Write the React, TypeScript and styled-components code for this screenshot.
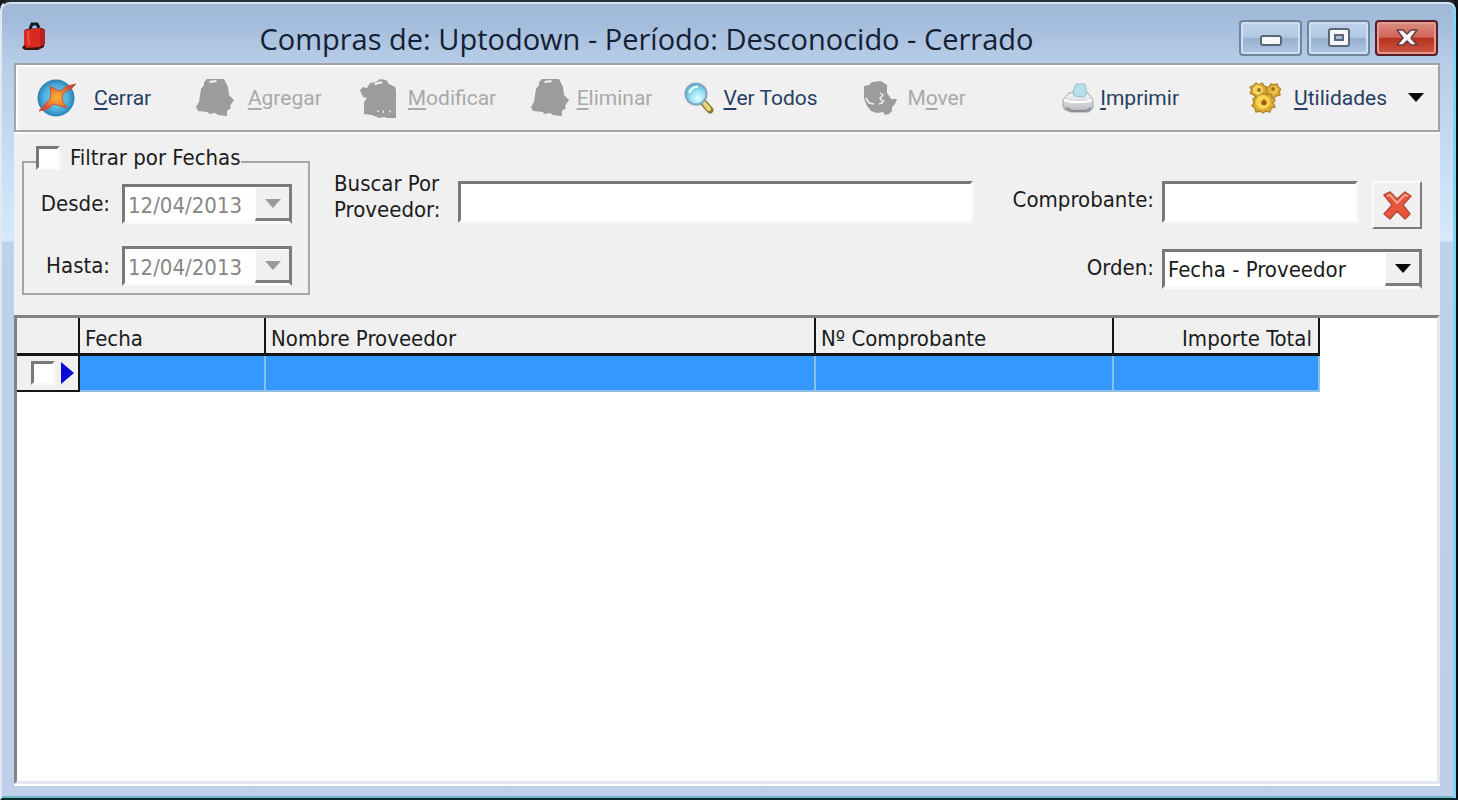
import React from "react";
import styled, { createGlobalStyle, css } from "styled-components";

const GlobalStyle = createGlobalStyle`
  *, *::before, *::after { box-sizing: border-box; }
  body {
    margin: 0;
    background: #16181c;
    color: #1c1c1c;
    font-family: "DejaVu Sans Condensed", "DejaVu Sans", Tahoma, sans-serif;
    font-size: 22px;
    line-height: 26px;
  }
  button, input, select { font: inherit; color: inherit; margin: 0; }
`;

const sunken = css`
  border: 3px solid;
  border-color: #787878 #fafafa #fafafa #787878;
  border-radius: 0;
`;

const raised = css`
  background: #f0f0f0;
  border: 2px solid;
  border-color: #fcfcfc #7c7c7c #7c7c7c #fcfcfc;
`;

const Frame = styled.main`
  display: flex;
  flex-direction: column;
  min-height: 100vh;
  padding: 0 16px 14px 12px;
  border: 2px solid;
  border-color: #2a2e36 #0b0f12 #04282e #dfeaf5;
  border-radius: 10px 10px 0 0;
  background: linear-gradient(#a0b8d4 0, #a3bcdc 20px, #b8cde8 62px, #c6dcf5 150px, #d6e9fb 239px, #bdd1ea 240px, #bfcfe9 100%);
  box-shadow: inset 0 2px 0 #d4e2f0, inset -3px 0 0 #86d2f3, inset 0 -2px 0 #6fb5c4;
`;

const TitleBar = styled.header`
  display: flex;
  align-items: flex-start;
  height: 61px;
  padding: 18px 2px 0 8px;
`;

const Title = styled.h1`
  flex: 1;
  margin: 0;
  padding-left: 8px;
  text-align: center;
  white-space: nowrap;
  font-family: "Open Sans", "Segoe UI", sans-serif;
  font-size: 29px;
  font-weight: 400;
  line-height: 38px;
  color: #142033;
`;

const AppIcon = styled.svg`
  width: 24px;
  height: 30px;
  margin-top: 2px;
`;

const WindowButtons = styled.div`
  display: flex;
  gap: 5px;
`;

const WindowButton = styled.button<{ $danger?: boolean }>`
  display: grid;
  place-items: center;
  width: 63px;
  height: 36px;
  padding: 0;
  border: 2px solid ${(p) => (p.$danger ? "#5a1d24" : "#71859f")};
  border-radius: 4px;
  box-shadow: inset 0 0 0 2px ${(p) => (p.$danger ? "#e39a90" : "#cfdff2")};
  background: ${(p) =>
    p.$danger
      ? "linear-gradient(#dc8d82 0, #cf6558 48%, #b5301f 50%, #cf5a45 100%)"
      : "linear-gradient(#bfd2ea 0, #b3c8e2 48%, #96afcd 50%, #b0c8e4 100%)"};
`;

const Client = styled.div`
  display: flex;
  flex: 1;
  flex-direction: column;
  background: #f0f0f0;
`;

const ToolBar = styled.nav`
  display: grid;
  grid-template-columns: 158fr 164fr 171fr 154fr 181fr 198fr 187fr auto;
  align-items: center;
  height: 69px;
  padding: 0 14px 0 21px;
  border: 2px solid #a2a4a8;
  box-shadow: inset 2px 2px 0 #fdfdfd, 0 2px 0 #fafafa;
`;

const ToolButton = styled.button<{ $gap: number }>`
  display: flex;
  align-items: center;
  gap: ${(p) => p.$gap}px;
  padding: 0;
  border: 0;
  background: none;
  text-align: left;
  white-space: nowrap;
  font-family: Roboto, Arial, sans-serif;
  font-size: 21px;
  line-height: 26px;
  color: #263f63;

  &:disabled { color: #a9a9a9; }
  svg { flex: none; }
`;

const Key = styled.span`
  text-decoration: underline;
  text-decoration-thickness: 2px;
  text-underline-offset: 3px;
`;

const Caret = styled.svg`
  width: 16px;
  height: 10px;
  margin-left: 8px;
`;

const Filters = styled.form`
  display: flex;
  align-items: flex-start;
  padding: 13px 18px 20px 8px;
`;

const DateGroup = styled.fieldset`
  display: grid;
  gap: 22px;
  width: 288px;
  margin: 0;
  padding: 5px 16px 7px 12px;
  border: 2px solid #a5a5a5;
`;

const Legend = styled.legend`
  padding: 0 0 8px;
`;

const CheckLabel = styled.label`
  display: flex;
  align-items: center;
  gap: 10px;
`;

const CheckBox = styled.input.attrs({ type: "checkbox" })`
  appearance: none;
  width: 24px;
  height: 24px;
  background: #fff;
  ${sunken}

  &:checked { background: radial-gradient(#1c1c1c 40%, #fff 45%); }
`;

const DateRow = styled.div`
  display: grid;
  grid-template-columns: 1fr 170px;
  gap: 12px;
  align-items: center;
  text-align: right;
`;

const DateBox = styled.div`
  display: flex;
  height: 40px;
  border: 3px solid;
  border-color: #787878 #7c7c7c #fafafa #787878;
  background: #fff;
`;

const DateInput = styled.input`
  flex: 1;
  min-width: 0;
  padding: 4px 0 0 3px;
  border: 0;
  background: none;
  &:disabled { color: #878787; }
`;

const DropButton = styled.button`
  display: grid;
  place-items: center;
  width: 34px;
  padding: 0;
  ${raised}
  border-width: 1px 0 3px 1px;
`;

const SearchLabel = styled.label`
  width: 124px;
  margin: 26px 0 0 24px;
`;

const TextInput = styled.input`
  min-width: 0;
  height: 42px;
  padding: 0 6px;
  background: #fff;
  ${sunken}
`;

const SearchInput = styled(TextInput)`
  flex: 1;
  margin-top: 36px;
`;

const OrderGrid = styled.div`
  display: grid;
  grid-template-columns: auto 260px;
  column-gap: 8px;
  row-gap: 20px;
  margin: 36px 0 0 40px;
  align-items: start;
  text-align: right;
`;

const FieldLabel = styled.label`
  padding-top: 6px;
`;

const VoucherField = styled.div`
  display: flex;
  align-items: flex-start;
  gap: 14px;
`;

const VoucherInput = styled(TextInput)`
  flex: 1;
`;

const ClearButton = styled.button`
  display: grid;
  place-items: center;
  width: 50px;
  height: 48px;
  padding: 0;
  ${raised}
`;

const SelectBox = styled.div`
  position: relative;
  height: 40px;
  border: 3px solid;
  border-color: #787878 #7c7c7c #fafafa #787878;
  background: #fff;
`;

const Select = styled.select`
  appearance: none;
  width: 100%;
  height: 100%;
  padding: 2px 34px 0 3px;
  border: 0;
  border-radius: 0;
  background: none;
`;

const SelectArrow = styled.span`
  position: absolute;
  top: 0;
  right: 0;
  bottom: 0;
  display: grid;
  place-items: center;
  width: 34px;
  pointer-events: none;
  ${raised}
  border-width: 1px 0 3px 1px;
`;

const GridPane = styled.section`
  flex: 1;
  overflow: auto;
  border: 3px solid;
  border-color: #808286 #e3e7ee #e3e7ee #808286;
  background: #fff;
  box-shadow: 0 2px 0 #fff;
`;

const Table = styled.table`
  table-layout: fixed;
  border-spacing: 0;
  width: 1303px;
`;

const Col = styled.col<{ $w: number }>`
  width: ${(p) => p.$w}px;
`;

const HeadCell = styled.th<{ $end?: boolean }>`
  height: 38px;
  padding: 6px 6px 0 5px;
  border-right: 2px solid #161616;
  border-bottom: 3px solid #161616;
  background: #f0f0f0;
  font-weight: 400;
  text-align: ${(p) => (p.$end ? "right" : "left")};
`;

const MarkerCell = styled.td`
  height: 36px;
  padding: 0 4px 0 14px;
  border-right: 2px solid #161616;
  border-bottom: 2px solid #161616;
  background: #f0f0f0;
`;

const Marker = styled.div`
  display: flex;
  align-items: center;
  justify-content: space-between;
`;

const DataCell = styled.td`
  padding: 0;
  border-right: 2px solid #8fbfe8;
  border-bottom: 2px solid #8fbfe8;
  background: #3399ff;
`;

const Down = ({ color }: { color: string }) => (
  <svg width="16" height="9" viewBox="0 0 16 9" aria-hidden="true">
    <path d="M0 0h16L8 9z" fill={color} />
  </svg>
);

const CloseIcon = () => (
  <svg width="40" height="40" viewBox="0 0 40 40" aria-hidden="true">
    <defs>
      <radialGradient id="globe">
        <stop offset="0" stopColor="#8ad2ee" />
        <stop offset="0.7" stopColor="#4aaedb" />
        <stop offset="1" stopColor="#2a7cb4" />
      </radialGradient>
      <radialGradient id="flame">
        <stop offset="0" stopColor="#ffae34" />
        <stop offset="0.5" stopColor="#f08a34" />
        <stop offset="1" stopColor="#cc4a3c" />
      </radialGradient>
    </defs>
    <circle cx="19" cy="20" r="18.500" fill="url(#globe)" />
    <path d="M13 8l7 4 4 1 6-5 9-2-5 5-8 4-1 7 5 8-7-2-6-2-6 5-9 2 5-6 6-6 1-6z" fill="url(#flame)" stroke="#c8583e" />
  </svg>
);

const BagAddIcon = () => (
  <svg width="40" height="40" viewBox="0 0 40 40" fill="#9c9c9c" aria-hidden="true">
    <path d="M9 4l3-3h17l2 4 2 4 1 8 5 5-4 6 1 2-4 3v5l-9-1-3-2-6 1-1-2-10-1-2-4 3-5 2-13 3-4z" />
    <path d="M14 3l7-1 1 2-7 1z" fill="#f0f0f0" />
  </svg>
);

const BagEditIcon = () => (
  <svg width="40" height="40" viewBox="0 0 40 40" fill="#9c9c9c" aria-hidden="true">
    <path d="M11 5l6-1 4-3 6 1 3 4 6 3 1 3v28l-8 1-3-2-6 1-7-3-8-1V24l3-4-4-1-3-7 3-3 4 1z" />
    <path d="M15 5l7-2 2 2-8 2zM17 33l3-1v2zM23 34l2-2v3zM30 32l2 1-1 2z" fill="#f0f0f0" />
  </svg>
);

const FindIcon = () => (
  <svg width="32" height="32" viewBox="0 0 32 32" aria-hidden="true">
    <defs>
      <radialGradient id="lens" cx="0.6" cy="0.7" r="0.8">
        <stop offset="0" stopColor="#e6fbff" />
        <stop offset="0.5" stopColor="#8edcf4" />
        <stop offset="1" stopColor="#3f9fce" />
      </radialGradient>
    </defs>
    <path d="M19 20l7 8" stroke="#8f7c3a" strokeWidth="7" strokeLinecap="round" />
    <path d="M20 21l5 6" stroke="#ecd87a" strokeWidth="4" strokeLinecap="round" />
    <circle cx="12" cy="12" r="10.500" fill="url(#lens)" stroke="#7fa6bc" strokeWidth="2" />
    <path d="M5 11q3-7 9-6" stroke="#f4feff" strokeWidth="2" fill="none" />
  </svg>
);

const MoveIcon = () => (
  <svg width="34" height="34" viewBox="0 0 34 34" fill="#9c9c9c" aria-hidden="true">
    <path d="M0 5l5-1 3-3 9-1 6 4v8l3 4 1 2h6l-2 5-3 3v4l-3 3-4 1-2-3-6 1-6-2-4-5-2-5-1-3z" />
    <path d="M2 17l3 5 5 1M16 12l3 2-3 3 2 3M20 19l-2 3-3 1" stroke="#f0f0f0" strokeWidth="1.500" fill="none" />
  </svg>
);

const PrintIcon = () => (
  <svg width="32" height="32" viewBox="0 0 32 32" aria-hidden="true">
    <defs>
      <linearGradient id="case" x2="0" y2="1">
        <stop offset="0" stopColor="#fafafa" />
        <stop offset="1" stopColor="#b2b4b8" />
      </linearGradient>
    </defs>
    <path d="M7 11h19l4 5 1 4v6l-4 4H9l-6-2-2-4v-6z" fill="url(#case)" stroke="#a2a4a8" />
    <path d="M14 2h9l2 9-3 4-10-1-1-5z" fill="#b4dfeb" stroke="#93bfcc" />
    <path d="M2 18l7 2h14l7-2" fill="none" stroke="#fff" strokeWidth="2" />
    <path d="M4 26l6 3h14l5-3" fill="none" stroke="#8c8e92" strokeWidth="2" />
  </svg>
);

const GearsIcon = () => (
  <svg width="32" height="32" viewBox="0 0 32 32" aria-hidden="true">
    <g fill="#dfae34" stroke="#b8892c" strokeWidth="1.500" strokeLinejoin="round">
      <path d="M7 1l3 2 3-2 2 3 3 1-1 3 2 3-3 2-2 3-4-1-3 1-2-3-4-2 2-3-2-3 3-1z" />
      <path d="M22 2l3 1 3-1 1 3 3 2-2 3 1 3-4 1-2 2-3-2-4 0 0-4-1-3 3-2z" />
      <path d="M7 12l4 1 4-2 3 2 4-1 1 4 3 2-2 3 2 4-4 1-1 4-4-1-3 2-3-2-4 1-1-4-3-2 2-3-1-4 3-1z" />
    </g>
    <circle cx="9" cy="8" r="5" fill="#f5d560" />
    <circle cx="25" cy="8" r="4" fill="#eec348" />
    <circle cx="14" cy="20" r="7" fill="#f8d650" />
    <circle cx="10" cy="8" r="2" fill="#a4701e" />
    <circle cx="24" cy="7" r="2" fill="#a4701e" />
    <path d="M12 20l3-3 3 3-1 3h-4z" fill="#a8541c" />
  </svg>
);

const DeleteIcon = () => (
  <svg width="32" height="32" viewBox="0 0 32 32" aria-hidden="true">
    <path
      d="M3 6l6-3 7 7 8-7 6 4-8 9 7 9-5 5-8-8-7 8-6-5 8-9z"
      fill="#e8553c"
      stroke="#b84a3b"
      strokeWidth="1.500"
      strokeLinejoin="round"
    />
    <path d="M6 7l3-1 7 8 8-8 3 1" fill="none" stroke="#f8a48c" strokeWidth="2" />
  </svg>
);

export default function App() {
  return (
    <>
      <GlobalStyle />
      <Frame>
        <TitleBar>
          <AppIcon viewBox="0 0 24 30" aria-hidden="true">
            <path d="M0 26l3 2h13l6-3 1-17-3-2-16 1-2 16z" fill="#3a1212" />
            <path d="M8 7l2-5h5l2 4" fill="none" stroke="#161a20" strokeWidth="3" />
            <path d="M2 8l16-2v19l-13 1-3-3z" fill="#d92a22" />
            <path d="M18 6l5 2v14l-5 3z" fill="#b8211e" />
            <path d="M6 9l1 14" stroke="#ee5040" strokeWidth="2" />
          </AppIcon>
          <Title>Compras de: Uptodown - Período: Desconocido - Cerrado</Title>
          <WindowButtons>
            <WindowButton type="button" aria-label="Minimizar">
              <svg width="24" height="20" viewBox="0 0 24 20" aria-hidden="true">
                <rect x="2" y="8" width="20" height="9" rx="2" fill="#f6f8fa" stroke="#5c6878" strokeWidth="2" />
              </svg>
            </WindowButton>
            <WindowButton type="button" aria-label="Maximizar">
              <svg width="24" height="20" viewBox="0 0 24 20" aria-hidden="true">
                <rect x="2" y="1" width="20" height="17" rx="2" fill="#f6f8fa" stroke="#5c6878" strokeWidth="2" />
                <rect x="8" y="7" width="8" height="5" fill="#a7bbd4" stroke="#5c6878" strokeWidth="2" />
              </svg>
            </WindowButton>
            <WindowButton type="button" aria-label="Cerrar ventana" $danger>
              <svg width="24" height="20" viewBox="0 0 24 20" aria-hidden="true">
                <path
                  d="M2 2h6l4 4 4-4h6l-6 8 6 7h-6l-4-4-4 4H2l6-7z"
                  fill="#f8f6f6"
                  stroke="#6a3a40"
                  strokeWidth="1.500"
                  strokeLinejoin="round"
                />
              </svg>
            </WindowButton>
          </WindowButtons>
        </TitleBar>

        <Client>
          <ToolBar aria-label="Acciones">
            <ToolButton type="button" $gap={17}>
              <CloseIcon />
              <span><Key>C</Key>errar</span>
            </ToolButton>
            <ToolButton type="button" $gap={13} disabled>
              <BagAddIcon />
              <span><Key>A</Key>gregar</span>
            </ToolButton>
            <ToolButton type="button" $gap={9} disabled>
              <BagEditIcon />
              <span><Key>M</Key>odificar</span>
            </ToolButton>
            <ToolButton type="button" $gap={7} disabled>
              <BagAddIcon />
              <span><Key>E</Key>liminar</span>
            </ToolButton>
            <ToolButton type="button" $gap={8}>
              <FindIcon />
              <span><Key>V</Key>er Todos</span>
            </ToolButton>
            <ToolButton type="button" $gap={9} disabled>
              <MoveIcon />
              <span>M<Key>o</Key>ver</span>
            </ToolButton>
            <ToolButton type="button" $gap={6}>
              <PrintIcon />
              <span><Key>I</Key>mprimir</span>
            </ToolButton>
            <ToolButton type="button" $gap={13}>
              <GearsIcon />
              <span><Key>U</Key>tilidades</span>
              <Caret viewBox="0 0 16 10" aria-hidden="true">
                <path d="M0 0h16L8 9z" fill="#080808" />
              </Caret>
            </ToolButton>
          </ToolBar>

          <Filters onSubmit={(e) => e.preventDefault()}>
            <DateGroup>
              <Legend>
                <CheckLabel>
                  <CheckBox />
                  Filtrar por Fechas
                </CheckLabel>
              </Legend>
              <DateRow>
                <label htmlFor="desde">Desde:</label>
                <DateBox>
                  <DateInput id="desde" defaultValue="12/04/2013" disabled />
                  <DropButton type="button" aria-label="Elegir fecha desde" disabled>
                    <Down color="#9a9a9a" />
                  </DropButton>
                </DateBox>
              </DateRow>
              <DateRow>
                <label htmlFor="hasta">Hasta:</label>
                <DateBox>
                  <DateInput id="hasta" defaultValue="12/04/2013" disabled />
                  <DropButton type="button" aria-label="Elegir fecha hasta" disabled>
                    <Down color="#9a9a9a" />
                  </DropButton>
                </DateBox>
              </DateRow>
            </DateGroup>

            <SearchLabel htmlFor="buscar">
              Buscar Por
              <br />
              Proveedor:
            </SearchLabel>
            <SearchInput id="buscar" type="text" />

            <OrderGrid>
              <FieldLabel htmlFor="comprobante">Comprobante:</FieldLabel>
              <VoucherField>
                <VoucherInput id="comprobante" type="text" />
                <ClearButton type="button" aria-label="Borrar búsqueda">
                  <DeleteIcon />
                </ClearButton>
              </VoucherField>
              <FieldLabel htmlFor="orden">Orden:</FieldLabel>
              <SelectBox>
                <Select id="orden" defaultValue="fp">
                  <option value="fp">Fecha - Proveedor</option>
                </Select>
                <SelectArrow>
                  <Down color="#080808" />
                </SelectArrow>
              </SelectBox>
            </OrderGrid>
          </Filters>

          <GridPane>
            <Table>
              <colgroup>
                <Col $w={63} />
                <Col $w={186} />
                <Col $w={550} />
                <Col $w={298} />
                <Col $w={206} />
              </colgroup>
              <thead>
                <tr>
                  <HeadCell aria-label="Selección" />
                  <HeadCell>Fecha</HeadCell>
                  <HeadCell>Nombre Proveedor</HeadCell>
                  <HeadCell>Nº Comprobante</HeadCell>
                  <HeadCell $end>Importe Total</HeadCell>
                </tr>
              </thead>
              <tbody>
                <tr>
                  <MarkerCell>
                    <Marker>
                      <CheckBox aria-label="Seleccionar fila" />
                      <svg width="13" height="22" viewBox="0 0 13 22" aria-hidden="true">
                        <path d="M0 0l13 11L0 22z" fill="#0808d8" />
                      </svg>
                    </Marker>
                  </MarkerCell>
                  <DataCell />
                  <DataCell />
                  <DataCell />
                  <DataCell />
                </tr>
              </tbody>
            </Table>
          </GridPane>
        </Client>
      </Frame>
    </>
  );
}
